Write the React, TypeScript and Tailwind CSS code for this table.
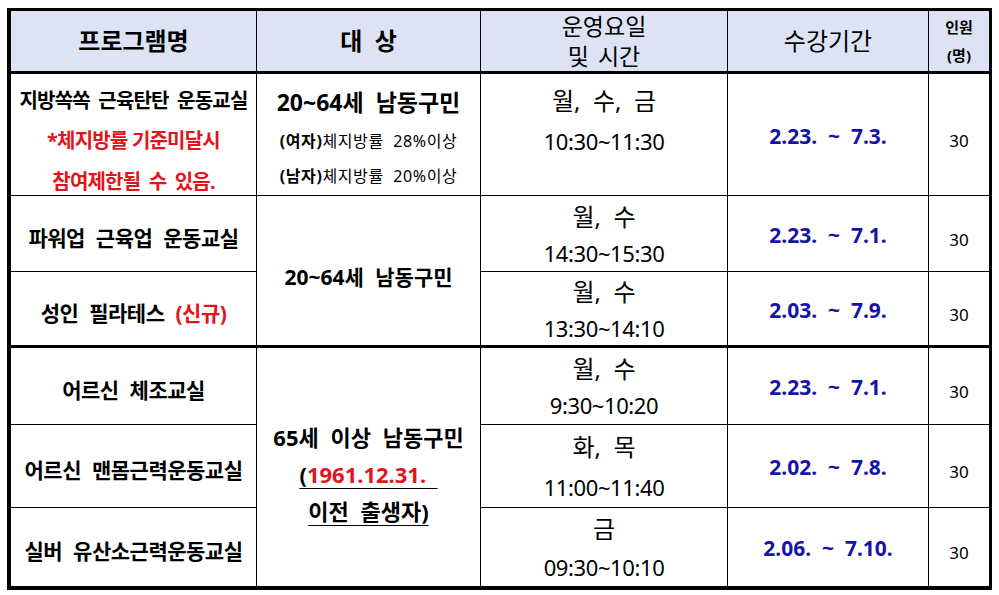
// Program schedule table (2.23 ~ 7.10 semester)

const FONT = "font-['Noto_Sans','Noto_Sans_CJK_KR',sans-serif]";

const head = "flex items-center justify-center bg-[#dde3f5] border-r border-b-[3px] border-black";
const cell = "flex flex-col items-center overflow-hidden border-r border-b border-black";

type Row = {
  name: React.ReactNode;
  day: string;
  time: string;
  pt: string;
  lead: string;
  date: string;
  last?: boolean;
  thick?: boolean;
};

function NameCell({ children, thick, last }: { children: React.ReactNode; thick?: boolean; last?: boolean }) {
  return (
    <div
      className={`${cell} justify-center pt-[10px] text-[21px] font-bold tracking-[-0.5px] [word-spacing:6px] ${
        thick ? "border-b-[3px]" : ""
      } ${last ? "border-b-0" : ""}`}
    >
      {children}
    </div>
  );
}

function TimeCell({ row }: { row: Row }) {
  return (
    <div
      className={`${cell} justify-start ${row.pt} ${row.thick ? "border-b-[3px]" : ""} ${
        row.last ? "border-b-0" : ""
      }`}
    >
      <p className={`${row.lead} whitespace-pre text-[24px]`}>{row.day}</p>
      <p className={`${row.lead} text-[22px] tracking-[-0.4px]`}>{row.time}</p>
    </div>
  );
}

function DateCell({ row }: { row: Row }) {
  return (
    <div
      className={`${cell} justify-center pt-1 ${row.thick ? "border-b-[3px]" : ""} ${row.last ? "border-b-0" : ""}`}
    >
      <p className="whitespace-pre text-[21px] font-bold text-[#1414aa]">{row.date}</p>
    </div>
  );
}

function CountCell({ row }: { row: Row }) {
  return (
    <div
      className={`flex items-center justify-center overflow-hidden border-b border-black pt-3 text-[17px] ${
        row.thick ? "border-b-[3px]" : ""
      } ${row.last ? "border-b-0" : ""}`}
    >
      30
    </div>
  );
}

const rows: Row[] = [
  { name: "", day: "월,  수,  금", time: "10:30~11:30", pt: "pt-[6px]", lead: "leading-[41px]", date: "2.23.  ~  7.3." },
  { name: "파워업 근육업 운동교실", day: "월,  수", time: "14:30~15:30", pt: "pt-[2px]", lead: "leading-[37px]", date: "2.23.  ~  7.1." },
  { name: "", day: "월,  수", time: "13:30~14:10", pt: "pt-[1px]", lead: "leading-[37px]", date: "2.03.  ~  7.9.", thick: true },
  { name: "어르신 체조교실", day: "월,  수", time: "9:30~10:20", pt: "pt-[2px]", lead: "leading-[37px]", date: "2.23.  ~  7.1." },
  { name: "어르신 맨몸근력운동교실", day: "화,  목", time: "11:00~11:40", pt: "pt-[2px]", lead: "leading-[40px]", date: "2.02.  ~  7.8." },
  { name: "실버 유산소근력운동교실", day: "금", time: "09:30~10:10", pt: "pt-[2px]", lead: "leading-[38px]", date: "2.06.  ~  7.10.", last: true },
];

export default function App() {
  const [r1, r2, r3, r4, r5, r6] = rows;

  return (
    <main className={`min-h-[595px] w-[999px] bg-white pl-[7px] pt-[8px] text-black ${FONT}`}>
      <div className="grid w-[985px] grid-cols-[246px_224px_247px_201px_60px] grid-rows-[63px_122px_76px_76px_77px_83px_78px] border-[3px] border-b-4 border-l-4 border-black">
        {/* header */}
        <div className={`${head} text-[24px] font-bold`}>프로그램명</div>
        <div className={`${head} whitespace-pre text-[24px] font-bold`}>대  상</div>
        <div className={`${head} flex-col text-[23px] leading-[30px]`}>
          <span>운영요일</span>
          <span className="[word-spacing:3px]">및 시간</span>
        </div>
        <div className={`${head} text-[24px]`}>수강기간</div>
        <div className="flex flex-col items-center justify-center border-b-[3px] border-black bg-[#dde3f5] text-[15px] font-bold leading-[28px]">
          <span>인원</span>
          <span>(명)</span>
        </div>

        {/* row 1 */}
        <div className={`${cell} justify-center pt-[14px] text-[20px] font-bold leading-[40.5px] tracking-[-0.8px]`}>
          <p className="[word-spacing:4px]">지방쏙쏙 근육탄탄 운동교실</p>
          <p className="text-[#e3141b]">*체지방률 기준미달시</p>
          <p className="text-[#e3141b] [word-spacing:4px]">참여제한될 수 있음.</p>
        </div>
        <div className={`${cell} justify-start pt-[7px]`}>
          <p className="text-[23px] font-bold leading-[42px] [word-spacing:6px]">20~64세 남동구민</p>
          <p className="text-[16px] leading-[36px] tracking-[0.6px]">
            <b>(여자)</b>체지방률 <span className="whitespace-pre"> 28%이상</span>
          </p>
          <p className="text-[16px] leading-[34px] tracking-[0.6px]">
            <b>(남자)</b>체지방률 <span className="whitespace-pre"> 20%이상</span>
          </p>
        </div>
        <TimeCell row={r1} />
        <DateCell row={r1} />
        <CountCell row={r1} />

        {/* rows 2-3 */}
        <NameCell>{r2.name}</NameCell>
        <div className={`${cell} row-span-2 justify-center border-b-[3px] pt-[14px] text-[21px] font-bold [word-spacing:6px]`}>
          20~64세 남동구민
        </div>
        <TimeCell row={r2} />
        <DateCell row={r2} />
        <CountCell row={r2} />

        <NameCell thick>
          <p>
            성인 필라테스 <span className="text-[#e3141b]">(신규)</span>
          </p>
        </NameCell>
        <TimeCell row={r3} />
        <DateCell row={r3} />
        <CountCell row={r3} />

        {/* rows 4-6 */}
        <NameCell>{r4.name}</NameCell>
        <div className={`${cell} row-span-3 justify-center border-b-0 pt-[14px] text-[22px] font-bold leading-[37px]`}>
          <p className="[word-spacing:6px]">65세 이상 남동구민</p>
          <p className="whitespace-pre underline decoration-1 underline-offset-[5px]">
            (<span className="text-[#e3141b]">1961.12.31.</span>{"  "}
          </p>
          <p className="underline decoration-1 underline-offset-[5px] [word-spacing:6px]">이전 출생자)</p>
        </div>
        <TimeCell row={r4} />
        <DateCell row={r4} />
        <CountCell row={r4} />

        <NameCell>{r5.name}</NameCell>
        <TimeCell row={r5} />
        <DateCell row={r5} />
        <CountCell row={r5} />

        <NameCell last>{r6.name}</NameCell>
        <TimeCell row={r6} />
        <DateCell row={r6} />
        <CountCell row={r6} />
      </div>
    </main>
  );
}
